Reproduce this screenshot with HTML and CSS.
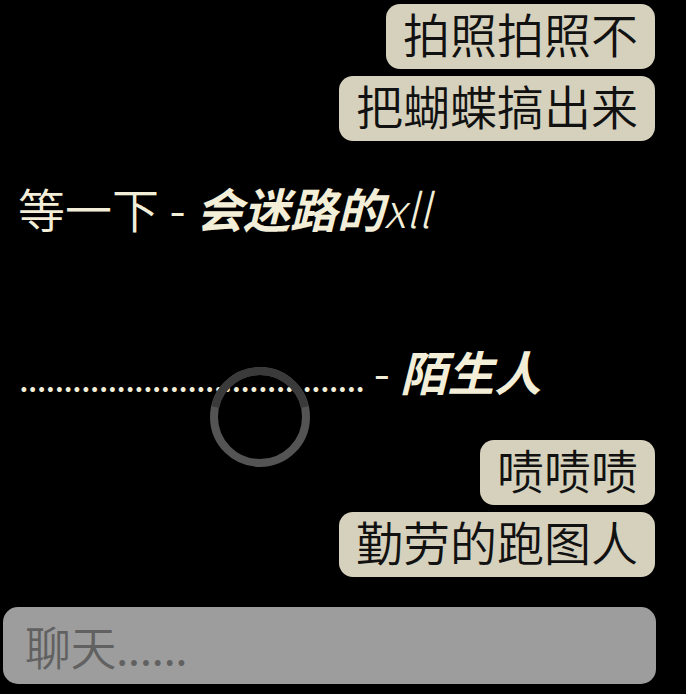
FILE: index.html
```html
<!DOCTYPE html>
<html lang="zh-CN">
<head>
<meta charset="utf-8">
<title>聊天</title>
<link rel="stylesheet" href="styles.css">
</head>
<body>
<div class="chat">
  <div class="bubble b1">拍照拍照不</div>
  <div class="bubble b2">把蝴蝶搞出来</div>
  <div class="line l3">等一下 - <span class="name">会迷路的<span class="thin">xll</span></span></div>
  <div class="line l4"><span class="dots">.......................................</span> - <span class="name">陌生人</span></div>
  <div class="bubble b3">啧啧啧</div>
  <div class="bubble b4">勤劳的跑图人</div>
  <div class="input"><span class="placeholder">聊天......</span></div>
</div>
<svg class="spinner" width="100" height="100" viewBox="0 0 100 100" aria-hidden="true">
  <circle cx="50" cy="50" r="46" fill="none" stroke="#545454" stroke-width="8"/>
  <path d="M 5.1 40 A 46 46 0 0 1 94.9 40" fill="none" stroke="#3a3a3a" stroke-width="8"/>
</svg>
</body>
</html>
```
FILE: styles.css
```css
html, body {
  margin: 0;
  padding: 0;
}
body {
  background: #000;
  width: 686px;
  height: 694px;
  overflow: hidden;
  position: relative;
  font-family: "Noto Sans CJK SC", "Noto Sans", sans-serif;
  font-weight: 350;
}
.chat {
  display: flex;
  flex-direction: column;
  padding-top: 4px;
}
.bubble {
  align-self: flex-end;
  margin-right: 31px;
  background: #d6d1bd;
  color: #111;
  font-size: 47px;
  line-height: 57px;
  padding: 0 17px 8px;
  border-radius: 14px;
}
.b2 { margin-top: 7px; }
.b3 { margin-top: 42px; }
.b4 { margin-top: 7px; }
.line {
  padding-left: 18px;
  color: #f3eed8;
  font-size: 47px;
  line-height: 55px;
  white-space: nowrap;
}
.l3 { margin-top: 39px; }
.l4 { margin-top: 108px; }
.name {
  font-weight: 700;
  font-style: italic;
}
.thin {
  font-weight: 300;
}
.dots {
  letter-spacing: -2.9px;
  font-weight: 300;
}
.input {
  margin: 30px 0 0 3px;
  width: 653px;
  height: 77px;
  box-sizing: border-box;
  background: #9d9d9d;
  border-radius: 15px;
  padding-left: 22px;
  display: flex;
  align-items: center;
}
.placeholder {
  color: #616161;
  font-size: 46px;
  line-height: 55px;
  letter-spacing: -0.5px;
}
.spinner {
  position: absolute;
  left: 210px;
  top: 367px;
}
```
